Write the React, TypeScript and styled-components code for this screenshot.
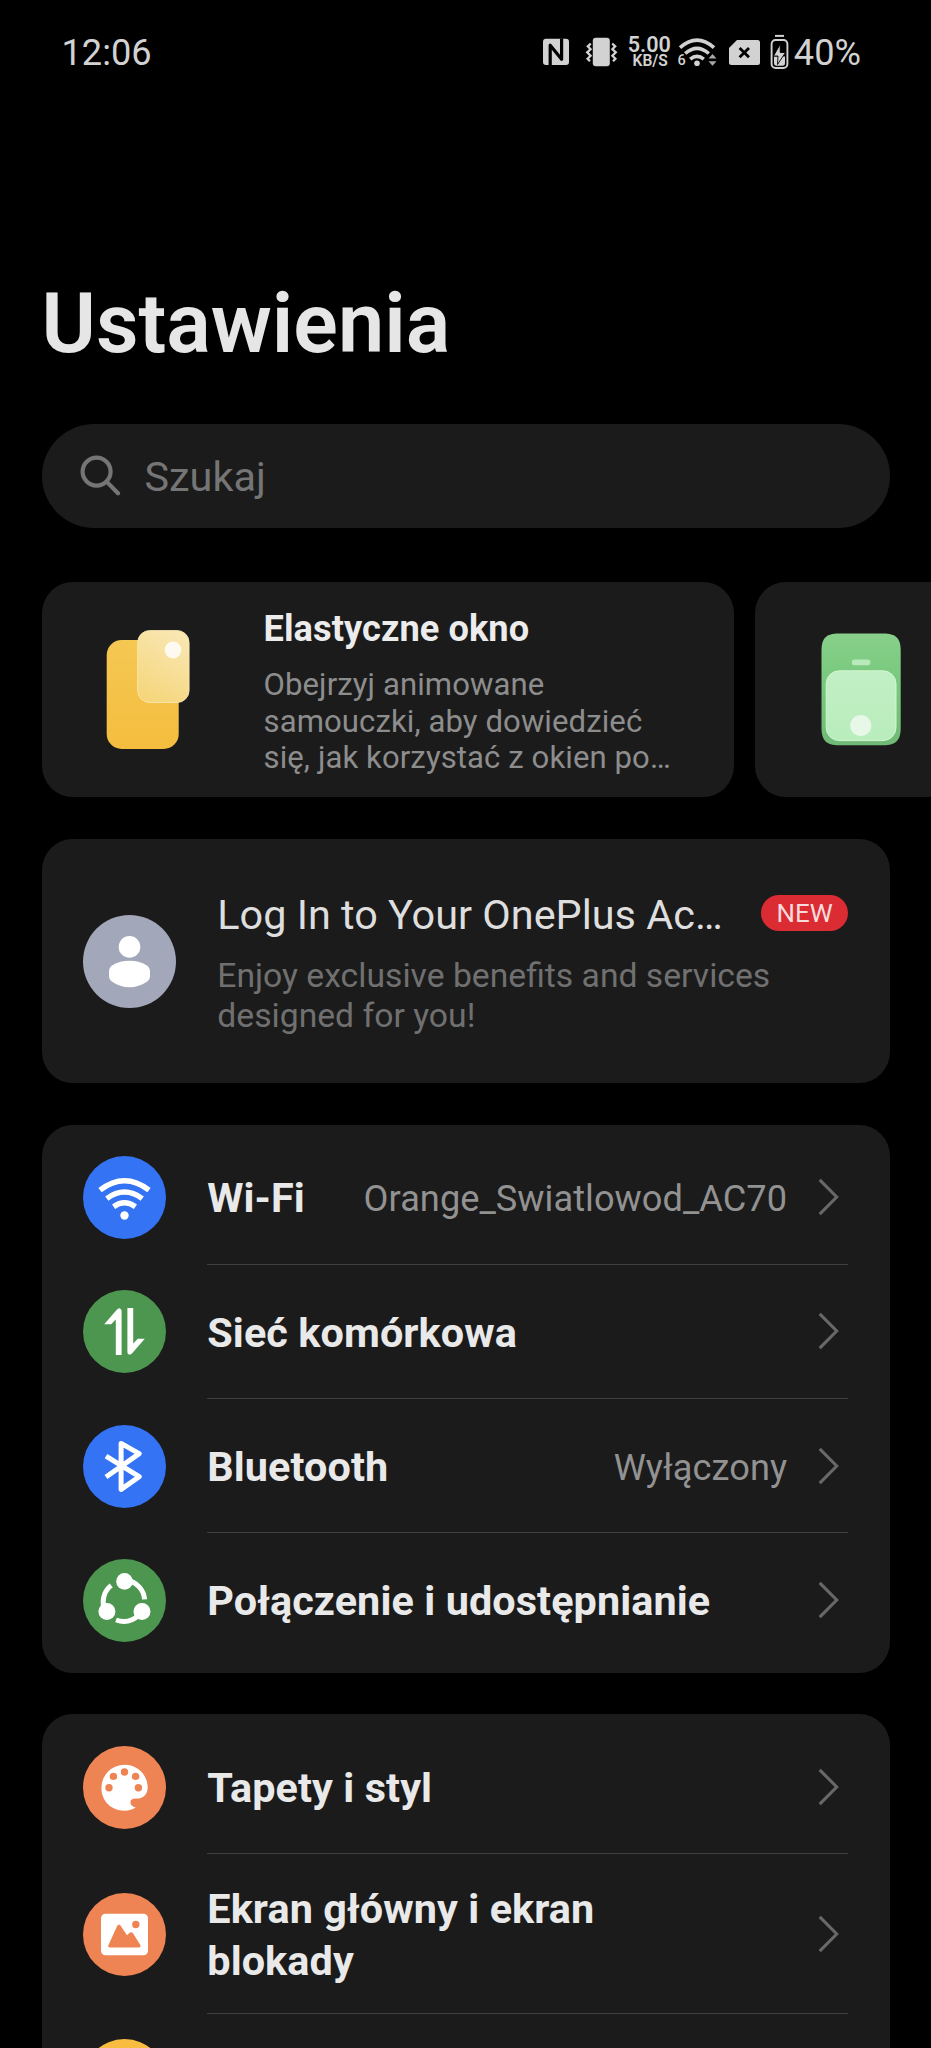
import React from "react";
import styled, { createGlobalStyle } from "styled-components";

const GlobalStyle = createGlobalStyle`
  * { box-sizing: border-box; }
  html, body { margin: 0; background: #000; }
  body { overflow: hidden; font-family: Roboto, "Noto Sans", sans-serif; color: #e6e6e6; }
  p, h1, h2 { margin: 0; }
  svg { display: block; flex: none; }
`;

const Screen = styled.main`
  width: 931px;
  height: 2048px;
  overflow: hidden;
  background: #000;
  padding: 0 41.5px;
  display: flex;
  flex-direction: column;
`;

const StatusBar = styled.header`
  height: 104px;
  flex: none;
  display: flex;
  align-items: center;
  justify-content: space-between;
  padding: 1px 28.5px 0 20px;
  color: #d2d2d2;
`;

const Clock = styled.span`
  font-size: 36.2px;
  line-height: 44px;
`;

const StatusIcons = styled.div`
  display: flex;
  align-items: center;
`;

const Speed = styled.div`
  display: flex;
  flex-direction: column;
  align-items: flex-end;
  width: 46px;
  margin: 0 6px 0 6.3px;
  font-family: Roboto, sans-serif;
  font-weight: 600;
`;

const SpeedValue = styled.span`
  font-size: 21.6px;
  line-height: 17px;
`;

const SpeedUnit = styled.span`
  font-size: 15.6px;
  line-height: 16px;
  padding-right: 3px;
`;

const Battery = styled.span`
  font-size: 36.2px;
  line-height: 44px;
  margin-left: 5px;
`;

const Title = styled.h1`
  margin-top: 171px;
  height: 98px;
  flex: none;
  font-size: 82.8px;
  line-height: 98px;
  font-weight: 600;
`;

const Search = styled.div`
  margin-top: 51px;
  height: 103.5px;
  flex: none;
  border-radius: 52px;
  background: #1b1b1b;
  display: flex;
  align-items: center;
  padding-left: 38px;
  gap: 24px;
  color: #757575;
  font-size: 41.4px;
`;

const SearchHint = styled.span`
  line-height: 48px;
  padding-top: 3px;
`;

const Promos = styled.section`
  margin-top: 54.5px;
  flex: none;
  display: flex;
  gap: 20.7px;
  width: 889.5px;
  overflow: hidden;
`;

const Promo = styled.article`
  flex: none;
  width: 692.8px;
  height: 215px;
  border-radius: 31px;
  background: #1b1b1b;
  display: flex;
`;

const PromoArt = styled.div`
  width: 222px;
  flex: none;
`;

const PromoText = styled.div`
  padding-top: 25px;
  width: 420px;
`;

const PromoTitle = styled.h2`
  font-size: 36.2px;
  line-height: 44px;
  font-weight: 700;
  letter-spacing: 0.07px;
  color: #ececec;
`;

const PromoBody = styled.p`
  margin-top: 16.4px;
  font-size: 31.1px;
  line-height: 36.2px;
  letter-spacing: 0.09px;
  color: #8d8d8d;
  white-space: nowrap;
`;

const Account = styled.section`
  margin-top: 42px;
  height: 244px;
  flex: none;
  border-radius: 31px;
  background: #1b1b1b;
  display: flex;
  align-items: center;
  padding: 0 41.4px;
  gap: 41.4px;
`;

const AccountText = styled.div`
  flex: 1;
  padding-top: 4px;
`;

const AccountHead = styled.div`
  display: flex;
  align-items: flex-start;
  justify-content: space-between;
`;

const AccountTitle = styled.h2`
  font-size: 41.4px;
  line-height: 49px;
  font-weight: 400;
  color: #dedede;
`;

const NewBadge = styled.span`
  margin-top: 4px;
  width: 87px;
  height: 36px;
  border-radius: 18px;
  background: #db2b33;
  color: #f8dcdc;
  font-size: 25.9px;
  line-height: 37px;
  text-align: center;
`;

const AccountBody = styled.p`
  margin-top: 16px;
  font-size: 33.7px;
  line-height: 39.5px;
  color: #707070;
`;

const Group = styled.section`
  margin-top: 41.7px;
  flex: none;
  border-radius: 31px;
  background: #1b1b1b;
  padding: 5.6px 41.4px 4.8px 41.4px;
`;

const Row = styled.div<{ $tall?: boolean }>`
  height: ${(p) => (p.$tall ? 159.4 : 134.4)}px;
  display: flex;
  align-items: center;
  gap: 41.4px;
`;

const RowContent = styled.div<{ $line: boolean }>`
  flex: 1;
  height: 100%;
  display: flex;
  align-items: center;
  border-bottom: 1px solid ${(p) => (p.$line ? "#3f3f3f" : "transparent")};
  padding-right: 9px;
`;

const RowLabel = styled.span`
  flex: 1;
  font-size: 41.4px;
  line-height: 51.4px;
  font-weight: 700;
  letter-spacing: 0.08px;
  padding-top: 4px;
  color: #e9e9e9;
  white-space: pre-line;
`;

const RowValue = styled.span`
  font-size: 36.2px;
  line-height: 44px;
  letter-spacing: 0.04px;
  padding-top: 4px;
  margin-right: 31px;
  color: #929292;
`;

const Chevron = () => (
  <svg width="21" height="38" viewBox="0 0 21 38" fill="none" stroke="#686868" strokeWidth="3.1">
    <path d="M1.7 1.8 18.7 19 1.7 36.2" />
  </svg>
);

/* Round icons share one 83-unit box; the artwork is centred on 41.5. */
const Disc = ({ color, children }: { color: string; children?: React.ReactNode }) => (
  <svg width="83" height="83" viewBox="0 0 83 83">
    <circle cx="41.5" cy="41.5" r="41.5" fill={color} />
    {children}
  </svg>
);

const WifiArt = () => (
  <g>
    <g fill="none" stroke="#fff" strokeWidth="5.4">
      <path d="M17 34.2Q41.5 15.5 66 34.2" />
      <path d="M23.8 42.6Q41.5 29.6 59.2 42.6" />
      <path d="M30.6 50.7Q41.5 43 52.4 50.7" />
    </g>
    <circle cx="41.5" cy="59.5" r="4.2" fill="#fff" />
  </g>
);

const CellularArt = () => (
  <g fill="#fff">
    <path d="M38.6 65H32.8V29.6L28.2 34.2H21.2L33.6 19.9Q35.4 17.8 37 18.4 38.6 19 38.6 21Z" />
    <path d="M44.4 18H50.2V53.4L54.8 48.8H61.8L49.4 63.1Q47.6 65.2 46 64.6 44.4 64 44.4 62Z" />
  </g>
);

const BluetoothArt = () => (
  <path
    d="M23 31.2 56.2 51.7 38.1 64.4V18.4L56.2 28.6 23 52"
    fill="none"
    stroke="#fff"
    strokeWidth="5"
    strokeLinejoin="round"
  />
);

const ShareArt = () => (
  <g>
    <g fill="none" stroke="#fff" strokeWidth="5">
      <path d="M44 21.5A20.5 20.5 0 0 1 61.6 40.4" />
      <path d="M28.2 26.4A21 21 0 0 0 21.4 50" />
      <path d="M33 61Q46 65.5 56 56" />
    </g>
    <g fill="#fff">
      <circle cx="41.5" cy="22.4" r="8.3" />
      <circle cx="23.9" cy="52.5" r="8.5" />
      <circle cx="59" cy="52.5" r="8.5" />
    </g>
  </g>
);

const PaletteArt = () => (
  <g>
    <path
      d="M41.5 18.7A23.2 23.2 0 0 0 18.4 42C18.4 55 28.5 64.7 41.5 64.7 46 64.7 50 63.4 52.8 61.3 49 60.6 47.4 58.6 47.5 56.2 47.7 53.2 50 52.6 54 52.6 60.5 52.6 64.7 48 64.7 41.5 64.5 28.5 54.5 18.7 41.5 18.7Z"
      fill="#fff"
    />
    <g fill="#ee8354">
      <circle cx="26" cy="41.7" r="3.7" />
      <circle cx="30.4" cy="30.4" r="3.7" />
      <circle cx="41.5" cy="26" r="3.7" />
      <circle cx="52.6" cy="30.4" r="3.7" />
      <circle cx="55.4" cy="41.7" r="3.7" />
    </g>
  </g>
);

const PictureArt = () => (
  <g>
    <rect x="18" y="20.8" width="47" height="41.5" rx="4.5" fill="#fff" />
    <path
      d="M27 54.4Q24.4 54.4 25.5 52L34 33.2Q36 29.8 38 33.2L44 42.3 46.5 40Q48.5 38.3 50 40.2L57.2 51.8Q58.3 54.4 55.8 54.4Z"
      fill="#ee8354"
    />
    <circle cx="52.8" cy="31.5" r="3.7" fill="#ee8354" />
  </g>
);

const WindowArt = () => (
  <svg width="222" height="215" viewBox="0 0 222 215">
    <defs>
      <linearGradient id="win-back" x1="0" y1="0" x2="0" y2="1">
        <stop offset="0" stopColor="#f5c853" />
        <stop offset="1" stopColor="#f4bd3e" />
      </linearGradient>
      <linearGradient id="win-front" x1=".7" y1="0" x2=".3" y2="1">
        <stop offset="0" stopColor="#f9e7b2" />
        <stop offset="1" stopColor="#f5d67c" />
      </linearGradient>
    </defs>
    <rect x="64.7" y="58" width="72" height="109" rx="15" fill="url(#win-back)" />
    <rect x="95.7" y="48.5" width="51.4" height="72" rx="12" fill="url(#win-front)" stroke="#fbeab8" strokeWidth=".8" />
    <circle cx="131" cy="68" r="8.4" fill="#fffaf0" />
  </svg>
);

const SplitArt = () => (
  <svg width="176" height="215" viewBox="0 0 176 215">
    <defs>
      <linearGradient id="split-back" x1="0" y1="0" x2="0" y2="1">
        <stop offset="0" stopColor="#88d08b" />
        <stop offset=".35" stopColor="#7bca80" />
        <stop offset="1" stopColor="#71b976" />
      </linearGradient>
      <linearGradient id="split-front" x1="0" y1="0" x2="0" y2="1">
        <stop offset="0" stopColor="#c2efc5" />
        <stop offset="1" stopColor="#b9edbc" />
      </linearGradient>
    </defs>
    <path
      d="M66.5 69C66.5 56 71 51.5 84 51.5H128C141 51.5 145.7 56 145.7 69V145.5C145.7 158.5 141 163.2 128 163.2H84C71 163.2 66.5 158.5 66.5 145.5Z"
      fill="url(#split-back)"
    />
    <rect x="96.8" y="77.6" width="18.6" height="5.6" rx="2.8" fill="#b9eabc" />
    <rect x="71.2" y="88.8" width="69.8" height="69.8" rx="13" fill="url(#split-front)" stroke="#d0f6d2" strokeWidth="1" />
    <circle cx="105.8" cy="143.6" r="10.6" fill="#e7f8e8" />
  </svg>
);

const Avatar = () => (
  <svg width="93" height="93" viewBox="0 0 93 93">
    <circle cx="46.5" cy="46.5" r="46.5" fill="#a2a8b9" />
    <circle cx="46.5" cy="31.9" r="10.8" fill="#fff" />
    <path
      d="M26 56.5Q26 52.6 29.5 50.2C39 44.4 54 44.4 63.5 50.2Q67 52.6 67 56.5V61.5Q67 64.4 64.5 66.2C53 74.4 40 74.4 28.5 66.2Q26 64.4 26 61.5Z"
      fill="#fff"
    />
  </svg>
);

const SearchGlyph = () => (
  <svg width="41" height="41" viewBox="0 0 41 41" fill="none" stroke="#757575" strokeWidth="4.2">
    <circle cx="16.6" cy="16.6" r="14" />
    <path d="M26.6 26.6 38 38.2" strokeLinecap="round" />
  </svg>
);

/* Glyphs of the status bar from NFC to battery, drawn in two strips round the speed text. */
const LeftGlyphs = () => (
  <svg width="78" height="44" viewBox="0 0 78 44" fill="#d2d2d2">
    <rect x="2" y="7.8" width="26" height="26.3" rx="3" />
    <path d="M9.2 34.4V14.2L20.6 28.2V7.6" fill="none" stroke="#000" strokeWidth="3.2" strokeLinejoin="round" />
    <path d="M14.8 27V34" stroke="#d2d2d2" strokeWidth="3" />
    <rect x="51.8" y="6.8" width="17" height="28.5" rx="3" />
    <path
      d="M49.8 12.5 46.8 15.3 49.6 18.3 46.2 21.4 49.6 24.7 46.6 27.7 49 30.2M71.2 12.5 74.2 15.3 71.4 18.3 74.8 21.4 71.4 24.7 74.4 27.7 72 30.2"
      fill="none"
      stroke="#d2d2d2"
      strokeWidth="2.3"
    />
  </svg>
);

const SmallText = styled.text`
  font: 500 14.5px Roboto, sans-serif;
`;

const RightGlyphs = () => (
  <svg width="112" height="44" viewBox="0 0 112 44" fill="#d2d2d2">
    <g fill="none" stroke="#d2d2d2" strokeWidth="3.6">
      <path d="M3 16.6Q20 1.5 37 16.6" />
      <path d="M8.2 22.5Q20 12.3 31.8 22.5" />
      <path d="M13.2 28.2Q20 22.4 26.8 28.2" />
    </g>
    <circle cx="20" cy="32.2" r="2.8" />
    <SmallText x="0.5" y="34.3">6</SmallText>
    <path d="M31.5 27.5 35.5 23 39.5 27.5ZM31.5 30.2 35.5 34.7 39.5 30.2Z" fill="#a8a8a8" />
    <path d="M60 9H80.5Q83 9 83 11.5V31.5Q83 34 80.5 34H54.5Q52 34 52 31.5V17Z" />
    <path d="M62.6 17 72 26.3M72 17 62.6 26.3" stroke="#000" strokeWidth="2.8" />
    <path d="M98 4.9H107" stroke="#d2d2d2" strokeWidth="2" />
    <rect x="94.6" y="9" width="15.8" height="28" rx="4" fill="none" stroke="#d2d2d2" strokeWidth="1.9" />
    <path d="M97 25.5H108V32Q108 34.7 105.5 34.7H99.5Q97 34.7 97 32Z" />
    <path d="M103.2 13.2 96.5 25H101L100.5 33.5 108.5 21.5H103.2Z" stroke="#000" strokeWidth=".9" />
  </svg>
);

type Item = {
  label: string;
  value?: string;
  color: string;
  art?: React.ReactNode;
  tall?: boolean;
};

const network: Item[] = [
  { label: "Wi-Fi", value: "Orange_Swiatlowod_AC70", color: "#3473f3", art: <WifiArt /> },
  { label: "Sieć komórkowa", color: "#4d964f", art: <CellularArt /> },
  { label: "Bluetooth", value: "Wyłączony", color: "#3473f3", art: <BluetoothArt /> },
  { label: "Połączenie i udostępnianie", color: "#4d964f", art: <ShareArt /> },
];

const display: Item[] = [
  { label: "Tapety i styl", color: "#ee8354", art: <PaletteArt /> },
  { label: "Ekran główny i ekran\nblokady", color: "#ee8354", art: <PictureArt />, tall: true },
  { label: "", color: "#f8bd40" },
];

const SettingsGroup = ({ items }: { items: Item[] }) => (
  <Group>
    {items.map((item, i) => (
      <Row key={i} $tall={item.tall}>
        <Disc color={item.color}>{item.art}</Disc>
        <RowContent $line={i < items.length - 1}>
          <RowLabel>{item.label}</RowLabel>
          {item.value && <RowValue>{item.value}</RowValue>}
          <Chevron />
        </RowContent>
      </Row>
    ))}
  </Group>
);

export default function App() {
  return (
    <Screen>
      <GlobalStyle />
      <StatusBar>
        <Clock>12:06</Clock>
        <StatusIcons>
          <LeftGlyphs />
          <Speed>
            <SpeedValue>5.00</SpeedValue>
            <SpeedUnit>KB/S</SpeedUnit>
          </Speed>
          <RightGlyphs />
          <Battery>40%</Battery>
        </StatusIcons>
      </StatusBar>
      <Title>Ustawienia</Title>
      <Search>
        <SearchGlyph />
        <SearchHint>Szukaj</SearchHint>
      </Search>
      <Promos>
        <Promo>
          <PromoArt>
            <WindowArt />
          </PromoArt>
          <PromoText>
            <PromoTitle>Elastyczne okno</PromoTitle>
            <PromoBody>
              Obejrzyj animowane
              <br />
              samouczki, aby dowiedzieć
              <br />
              się, jak korzystać z okien po…
            </PromoBody>
          </PromoText>
        </Promo>
        <Promo>
          <SplitArt />
        </Promo>
      </Promos>
      <Account>
        <Avatar />
        <AccountText>
          <AccountHead>
            <AccountTitle>Log In to Your OnePlus Ac…</AccountTitle>
            <NewBadge>NEW</NewBadge>
          </AccountHead>
          <AccountBody>
            Enjoy exclusive benefits and services
            <br />
            designed for you!
          </AccountBody>
        </AccountText>
      </Account>
      <SettingsGroup items={network} />
      <SettingsGroup items={display} />
    </Screen>
  );
}
